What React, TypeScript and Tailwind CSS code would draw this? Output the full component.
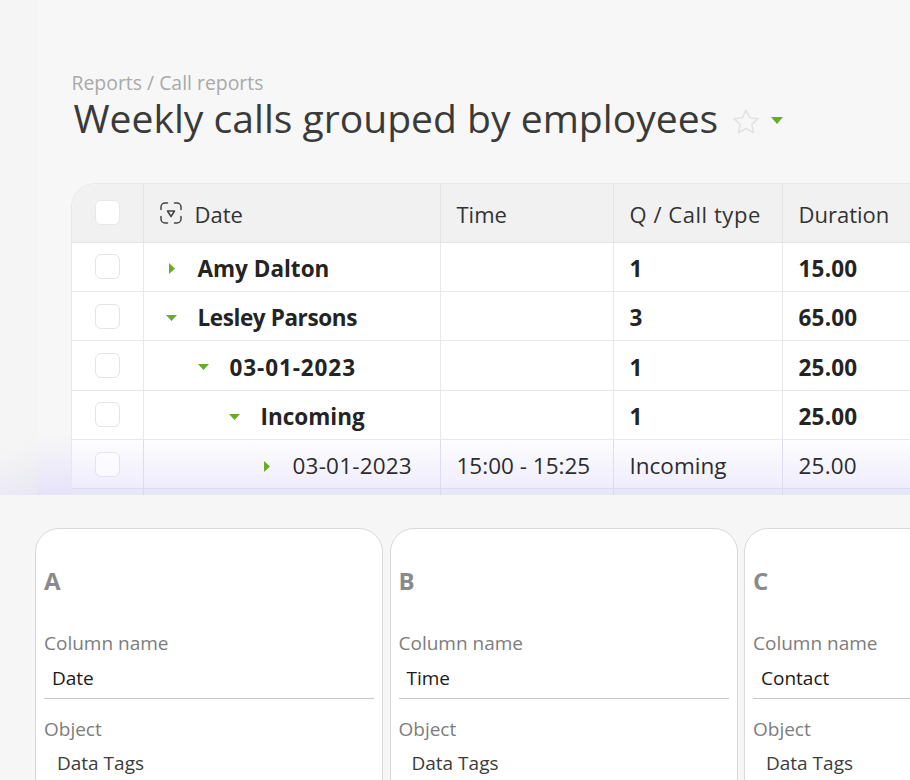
import React from "react"

const font = "font-['Open_Sans','Noto_Sans',sans-serif]"

type Row = {
  label: string
  labelSize?: string
  indent: string
  open: boolean
  bold: boolean
  time?: string
  q: string
  duration: string
}

const rows: Row[] = [
  { label: "Amy Dalton", indent: "pl-[22px]", open: false, bold: true, q: "1", duration: "15.00" },
  { label: "Lesley Parsons", labelSize: "tracking-[-0.4px]", indent: "pl-[22px]", open: true, bold: true, q: "3", duration: "65.00" },
  { label: "03-01-2023", labelSize: "tracking-[0.9px]", indent: "pl-[54px]", open: true, bold: true, q: "1", duration: "25.00" },
  { label: "Incoming", indent: "pl-[85px]", open: true, bold: true, q: "1", duration: "25.00" },
  { label: "03-01-2023", labelSize: "tracking-[0.2px]", indent: "pl-[117px]", open: false, bold: false, time: "15:00 - 15:25", q: "Incoming", duration: "25.00" },
]

const columns = [
  { key: "A", name: "Date" },
  { key: "B", name: "Time" },
  { key: "C", name: "Contact" },
]

const gridCols = "grid grid-cols-[72px_297px_173px_169px_200px]"

function Arrow({ open }: { open: boolean }) {
  return (
    <span className="flex w-3 h-3 shrink-0 items-center justify-center">
      {open ? (
        <svg width="11" height="6" viewBox="0 0 11 6"><path d="M0 0h11L5.5 6z" fill="#66ad24" /></svg>
      ) : (
        <svg width="6" height="11" viewBox="0 0 6 11"><path d="M0 0l6 5.5L0 11z" fill="#66ad24" /></svg>
      )}
    </span>
  )
}

function TableRow({ row }: { row: Row }) {
  const weight = row.bold ? "font-bold text-[#242424] bg-white" : "text-[#2c2c2c] bg-gradient-to-b from-[#fdfdff] to-[#efedfc]"
  const line = row.bold ? "border-[#e8e8e8]" : "border-[#dfdcef]"
  return (
    <div className={`${gridCols} h-[49.4px] border-b text-[22.5px] ${line} ${weight}`}>
      <div className={`flex items-center justify-center border-r ${line}`}>
        <div className="w-[25px] h-[25px] rounded-[6px] border border-[#e4e4e4] bg-white/50" />
      </div>
      <div className={`flex items-center gap-[20px] border-r pt-[4px] ${line} ${row.indent}`}>
        <Arrow open={row.open} />
        <span className={row.labelSize}>{row.label}</span>
      </div>
      <div className={`flex items-center border-r pl-4 pt-[4px] font-normal ${line}`}>{row.time}</div>
      <div className={`flex items-center border-r pl-4 pt-[4px] ${line}`}>{row.q}</div>
      <div className="flex items-center pl-4 pt-[4px] tracking-[0.2px]">{row.duration}</div>
    </div>
  )
}

function ColumnCard({ letter, name }: { letter: string; name: string }) {
  return (
    <div className="w-[348px] h-[290px] shrink-0 rounded-[24px] border border-[#d9d9d9] bg-white px-2 pt-[36px]">
      <div className="text-[24px] leading-[32px] font-bold text-[#8a8a8a]">{letter}</div>
      <div className="mt-[33px] text-[19px] leading-[26px] text-[#7d7d7d]">Column name</div>
      <div className="mt-[7px] h-[36px] border-b border-[#c8c8c8] pl-2 text-[19px] leading-[30px] text-[#1a1a1a]">{name}</div>
      <div className="mt-[17px] text-[19px] leading-[26px] text-[#7d7d7d]">Object</div>
      <div className="mt-[8px] pl-[13px] text-[19px] leading-[26px] text-[#3c3c3c]">Data Tags</div>
    </div>
  )
}

export default function App() {
  return (
    <div className={`${font} w-[910px] h-[780px] overflow-hidden bg-[#f6f6f6]`}>
      <div className="relative h-[495px] overflow-hidden flex bg-[#f7f7f7]">
        {/* lavender glow behind the cropped table */}
        <div className="absolute inset-x-0 bottom-0 h-[60px] bg-gradient-to-b from-[#e6e3fa]/0 to-[#e6e3fa]" />
        <div className="relative w-[37px] shrink-0 bg-[#f5f5f5]">
          <div className="absolute inset-x-0 bottom-0 h-[60px] bg-[linear-gradient(160deg,#f5f5f5_25%,#e8e7f4)]" />
        </div>
        <div className="relative pl-[33.5px] pt-[70px] w-[873px] shrink-0">
          <div className="pl-[1px] text-[19.4px] leading-[25px] text-[#a9a9a9]">Reports / Call reports</div>
          <div className="flex items-center h-[46px]">
            <h1 className="pl-[3px] text-[39.1px] leading-[46px] text-[#3a3a3a] whitespace-nowrap">Weekly calls grouped by employees</h1>
            <svg className="ml-[14px] mt-[5px]" width="28" height="26" viewBox="0 0 28 26" fill="none">
              <path d="M14 2l3.6 7.7 8.4 1-6.2 5.7 1.7 8.3L14 20.5 6.5 24.7l1.7-8.3L2 10.7l8.4-1z" stroke="#e2e2e2" strokeWidth="1.6" strokeLinejoin="round" />
            </svg>
            <svg className="ml-[11px] mt-[5px]" width="12" height="7" viewBox="0 0 12 7"><path d="M0 0h12L6 7z" fill="#66ad24" /></svg>
          </div>
          <div className="mt-[42px] w-[900px] overflow-hidden rounded-tl-[24px] border-l border-t border-[#e8e8e8]">
            <div className={`${gridCols} h-[58.5px] border-b border-[#e4e4e4] bg-[#f1f1f1] text-[22px] text-[#333333]`}>
              <div className="flex items-center justify-center border-r border-[#e4e4e4]">
                <div className="w-[25px] h-[25px] rounded-[6px] border border-[#e8e8e8] bg-white" />
              </div>
              <div className="flex items-center gap-[12px] border-r border-[#e4e4e4] pl-[15px]">
                <svg width="24" height="24" viewBox="0 0 24 24" fill="none" stroke="#444444" strokeWidth="1.5" strokeLinecap="round">
                  <path d="M2 8.5V6a4 4 0 0 1 4-4h2.5M15.5 2H18a4 4 0 0 1 4 4v2.5M22 15.5V18a4 4 0 0 1-4 4h-2.5M8.5 22H6a4 4 0 0 1-4-4v-2.5" />
                  <path d="M8.5 10h7L12 15.5z" strokeLinejoin="round" />
                </svg>
                <span className="pt-[3px]">Date</span>
              </div>
              <div className="flex items-center border-r border-[#e4e4e4] pl-4 pt-[3px]">Time</div>
              <div className="flex items-center border-r border-[#e4e4e4] pl-4 pt-[3px] tracking-[0.55px]">Q / Call type</div>
              <div className="flex items-center pl-4 pt-[3px]">Duration</div>
            </div>
            {rows.map((row, i) => (
              <TableRow key={i} row={row} />
            ))}
            <div className={`${gridCols} h-[10px] bg-[#e8e6f9]`}>
              <div className="border-r border-[#dcd9ee]" />
              <div className="border-r border-[#dcd9ee]" />
              <div className="border-r border-[#dcd9ee]" />
              <div className="border-r border-[#dcd9ee]" />
            </div>
          </div>
        </div>
      </div>
      <div className="flex gap-[6.5px] pl-[35px] pt-[33px]">
        {columns.map((c) => (
          <ColumnCard key={c.key} letter={c.key} name={c.name} />
        ))}
      </div>
    </div>
  )
}
